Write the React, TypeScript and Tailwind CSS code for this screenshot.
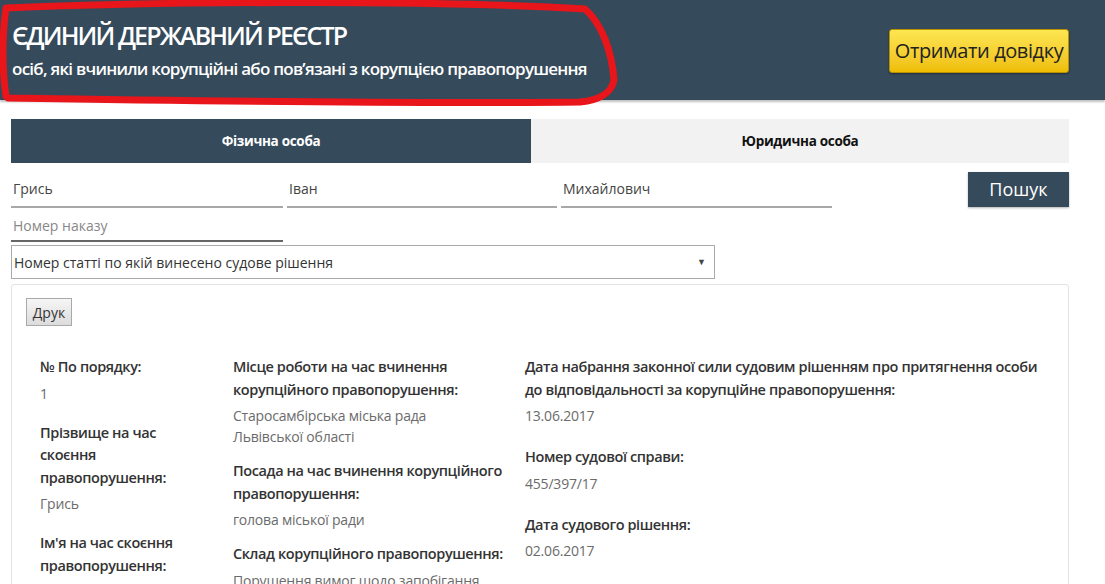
import React from "react";

const font = { fontFamily: '"Open Sans", "Noto Sans", sans-serif' };

type Item = { label: React.ReactNode; value: React.ReactNode };

const col1: Item[] = [
  { label: "№ По порядку:", value: "1" },
  { label: "Прізвище на час скоєння правопорушення:", value: "Грись" },
  { label: "Ім'я на час скоєння правопорушення:", value: "Іван" },
];

const col2: Item[] = [
  {
    label: "Місце роботи на час вчинення корупційного правопорушення:",
    value: (
      <>
        Старосамбірська міська рада
        <br />
        Львівської області
      </>
    ),
  },
  { label: "Посада на час вчинення корупційного правопорушення:", value: "голова міської ради" },
  { label: "Склад корупційного правопорушення:", value: "Порушення вимог щодо запобігання конфлікту інтересів" },
];

const col3: Item[] = [
  {
    label: "Дата набрання законної сили судовим рішенням про притягнення особи до відповідальності за корупційне правопорушення:",
    value: "13.06.2017",
  },
  { label: "Номер судової справи:", value: "455/397/17" },
  { label: "Дата судового рішення:", value: "02.06.2017" },
  { label: "Найменування суду:", value: "Старосамбірський районний суд" },
];

function Field({ item, gap }: { item: Item; gap: string }) {
  return (
    <div className={gap}>
      <div className="text-[14.5px] leading-[22.5px] font-semibold text-[#333] tracking-[-0.4px]">{item.label}</div>
      <div className="mt-[4px] text-[14px] leading-[21px] text-[#6b6b6b] tracking-[-0.2px]">{item.value}</div>
    </div>
  );
}

function RedMark() {
  // hand-drawn marker around the title
  return (
    <svg className="absolute left-0 top-0 pointer-events-none" width="630" height="110" viewBox="0 0 630 110">
      <path
        d="M6 96 C2 70 2 35 6 8 C150 2 420 -1 585 9 C602 24 612 52 614 80 C612 92 600 100 580 102 C420 104 200 101 8 98"
        fill="none"
        stroke="#e8151b"
        strokeWidth="7"
        strokeLinecap="round"
        strokeLinejoin="round"
      />
    </svg>
  );
}

export default function App() {
  return (
    <div className="relative w-[1105px] h-[584px] overflow-hidden bg-white" style={font}>
      {/* Header */}
      <header className="flex h-[100px] items-start justify-between bg-[#354a5b] px-3 pt-[20px] shadow-[0_2px_2px_rgba(0,0,0,0.25)]">
        <div className="text-white">
          <h1 className="text-[25px] leading-[30px] font-semibold tracking-[-1.9px] whitespace-nowrap">ЄДИНИЙ ДЕРЖАВНИЙ РЕЄСТР</h1>
          <p className="mt-[8px] text-[17px] leading-[22px] font-semibold tracking-[-0.75px] whitespace-nowrap">
            осіб, які вчинили корупційні або пов’язані з корупцією правопорушення
          </p>
        </div>
        <button className="mr-[24px] mt-[9px] h-[44px] w-[180px] rounded-[3px] border border-[#b99200] bg-gradient-to-b from-[#fde650] to-[#efbe00] text-[20px] text-[#222] tracking-[-0.4px] shadow-[0_1px_2px_rgba(0,0,0,0.4)]">
          Отримати довідку
        </button>
      </header>
      <RedMark />

      <div className="pl-[11px] pr-[36px]">
        {/* Tabs */}
        <div className="mt-[19px] flex h-[44px] text-[13.5px] font-bold tracking-[-0.3px]">
          <div className="flex w-[520px] items-center justify-center bg-[#354a5b] text-white">Фізична особа</div>
          <div className="flex flex-1 items-center justify-center bg-[#f2f2f2] text-[#111]">Юридична особа</div>
        </div>

        {/* Search inputs */}
        <div className="mt-[10px] flex items-start">
          <div className="flex gap-[4px]">
            {["Грись", "Іван", "Михайлович"].map((v, i) => (
              <div
                key={v}
                className={`h-[35px] ${i === 0 ? "w-[272px]" : i === 1 ? "w-[270px]" : "w-[271px]"} border-b-2 border-[#a8a8a8] px-[2px] pt-[5px] text-[14px] text-[#444]`}
              >
                {v}
              </div>
            ))}
          </div>
          <button className="ml-auto mt-[-1px] h-[35px] w-[101px] bg-[#354a5b] text-[18px] text-white shadow-[0_1px_2px_rgba(0,0,0,0.3)]">
            Пошук
          </button>
        </div>
        <div className="h-[34px] w-[272px] border-b-2 border-[#666] px-[2px] pt-[7px] text-[14px] text-[#888]">Номер наказу</div>
        <div className="mt-[3px] flex h-[34px] w-[704px] items-center justify-between border border-[#aaa] pl-[2px] pr-[8px] text-[14px] text-[#333]">
          <span>Номер статті по якій винесено судове рішення</span>
          <span className="text-[9px] text-[#444]">▼</span>
        </div>

        {/* Result card */}
        <div className="mt-[5px] h-[400px] rounded-[3px] border border-[#e3e3e3] px-[14px] pt-[13px]">
          <button className="h-[28px] w-[46px] border border-[#a9a9a9] bg-gradient-to-b from-[#f6f6f6] to-[#dcdcdc] text-[14px] text-[#333]">
            Друк
          </button>
          <div className="mt-[30px] grid grid-cols-[193px_292px_1fr] pl-[14px]">
            <div className="w-[160px]">
              {col1.map((it, i) => (
                <Field key={i} item={it} gap="mb-[18px]" />
              ))}
            </div>
            <div className="w-[275px]">
              {col2.map((it, i) => (
                <Field key={i} item={it} gap="mb-[13px]" />
              ))}
            </div>
            <div className="pr-[10px]">
              {col3.map((it, i) => (
                <Field key={i} item={it} gap="mb-[20px]" />
              ))}
            </div>
          </div>
        </div>
      </div>
    </div>
  );
}
